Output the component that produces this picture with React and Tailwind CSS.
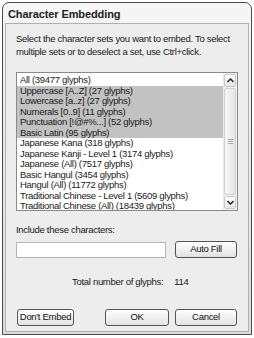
export default function App() {
  const items = [
    ["All  (39477 glyphs)", false],
    ["Uppercase [A..Z]  (27 glyphs)", true],
    ["Lowercase [a..z]  (27 glyphs)", true],
    ["Numerals [0..9]  (11 glyphs)", true],
    ["Punctuation [!@#%...]  (52 glyphs)", true],
    ["Basic Latin  (95 glyphs)", true],
    ["Japanese Kana  (318 glyphs)", false],
    ["Japanese Kanji - Level 1 (3174 glyphs)", false],
    ["Japanese (All)  (7517 glyphs)", false],
    ["Basic Hangul (3454 glyphs)", false],
    ["Hangul (All) (11772 glyphs)", false],
    ["Traditional Chinese - Level 1 (5609 glyphs)", false],
    ["Traditional Chinese (All)  (18439 glyphs)", false],
  ];
  const btn =
    "h-[17px] border border-[#555] rounded-[3px] bg-gradient-to-b from-white to-[#e2e2e2] flex items-center justify-center whitespace-nowrap text-[#111]";
  return (
    <div className="w-[254px] h-[338px] bg-white relative" style={{ fontFamily: '"Liberation Sans", sans-serif' }}>
      <div className="absolute left-[2px] top-[2px] w-[250px] h-[333px] border border-[#4a4a4a] rounded-t-[7px] bg-gradient-to-b from-[#f6f6f6] to-[#dcdcdc] flex flex-col overflow-hidden">
        <div className="h-[20px] shrink-0 flex items-center pl-[5px] pt-[3px] text-[11px] font-bold text-[#222] tracking-[-0.1px]">
          Character Embedding
        </div>
        <div className="flex-1 mx-[2px] mb-[2px] border border-[#b0b0b0] bg-[#ededed] flex flex-col px-[10px] pt-[8px] text-[9.5px] tracking-[-0.3px] text-[#1a1a1a]">
          <div className="leading-[13px] pr-[4px]">
            Select the character sets you want to embed. To select multiple sets or to deselect a set, use Ctrl+click.
          </div>
          <div className="mt-[14px] w-[222px] h-[139px] border border-[#8a8a8a] bg-white flex overflow-hidden">
            <div className="flex-1 flex flex-col overflow-hidden pt-[2px]">
              {items.map(([t, sel]) => (
                <div key={t} className={"h-[10.5px] shrink-0 leading-[10.5px] pl-[3px] whitespace-nowrap " + (sel ? "bg-[#c2c2c2]" : "")}>
                  {t}
                </div>
              ))}
            </div>
            <div className="w-[14px] flex flex-col bg-[#f2f2f2] border-l border-[#e8e8e8] py-[1px] pr-[1px]">
              <div className="h-[13px] border border-[#c8c8c8] rounded-[2px] bg-gradient-to-b from-white to-[#e6e6e6] flex items-center justify-center">
                <svg width="7" height="5" viewBox="0 0 7 5"><path d="M0.5 4L3.5 1L6.5 4" stroke="#333" strokeWidth="1.6" fill="none" /></svg>
              </div>
              <div className="flex-1 mt-[1px] border border-[#d0d0d0] rounded-[2px] bg-gradient-to-r from-[#f6f6f6] to-[#e4e4e4] flex items-center justify-center">
                <div className="flex flex-col gap-[1px]">
                  <div className="w-[5px] h-[1px] bg-[#aaa]" />
                  <div className="w-[5px] h-[1px] bg-[#aaa]" />
                  <div className="w-[5px] h-[1px] bg-[#aaa]" />
                </div>
              </div>
              <div className="h-[13px] mt-[1px] border border-[#c8c8c8] rounded-[2px] bg-gradient-to-b from-white to-[#e6e6e6] flex items-center justify-center">
                <svg width="7" height="5" viewBox="0 0 7 5"><path d="M0.5 1L3.5 4L6.5 1" stroke="#333" strokeWidth="1.6" fill="none" /></svg>
              </div>
            </div>
          </div>
          <div className="mt-[13px] leading-[12px]">Include these characters:</div>
          <div className="mt-[5px] flex items-center">
            <div className="w-[150px] h-[16px] border border-[#b5b5b5] bg-white" />
            <div className={btn + " ml-[9px] w-[62px]"}>Auto Fill</div>
          </div>
          <div className="mt-[18px] flex leading-[12px]">
            <span className="ml-[56px]">Total number of glyphs:</span>
            <span className="ml-[11px]">114</span>
          </div>
          <div className="mt-[21px] flex items-center">
            <div className={btn + " w-[57px] ml-[1px]"}>Don't Embed</div>
            <div className={btn + " w-[64px] ml-[31px]"}>OK</div>
            <div className={btn + " w-[62px] ml-[6px]"}>Cancel</div>
          </div>
        </div>
      </div>
    </div>
  );
}
